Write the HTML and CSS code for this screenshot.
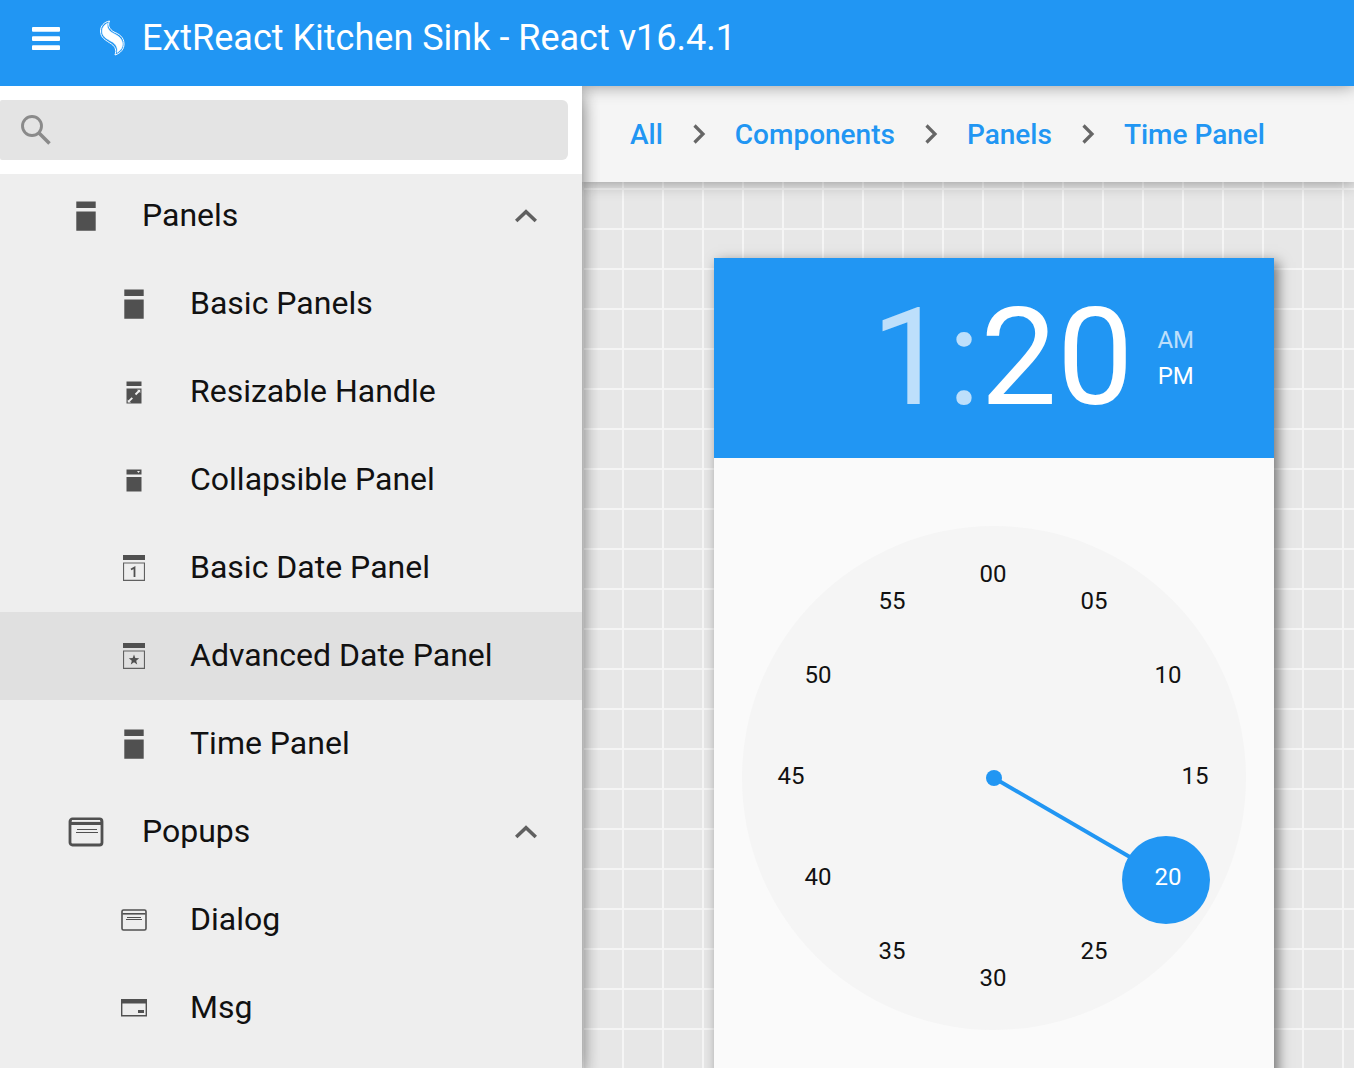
FILE: index.html
```
<!DOCTYPE html>
<html lang="en">
<head>
    <meta charset="UTF-8">
    <meta name="viewport" content="width=device-width, initial-scale=1.0">
    <title>ExtReact Kitchen Sink</title>
    <link rel="stylesheet" href="styles.css">
</head>
<body>
    <!-- shared icons -->
    <svg class="defs" width="0" height="0" aria-hidden="true">
        <symbol id="icon-panel" viewBox="0 0 20 30">
            <path d="M.3.500h19.400V7H.3zM.3 10.500h19.400v19.200H.3z"/>
        </symbol>
        <symbol id="icon-up" viewBox="0 0 22 14">
            <path d="M1.200 12 11 2.800l9.800 9.200" fill="none" stroke="currentColor" stroke-width="3.600"/>
        </symbol>
        <symbol id="icon-next" viewBox="0 0 14 20">
            <path d="M1.500 1.500 10 10l-8.500 8.500" fill="none" stroke="currentColor" stroke-width="3.200"/>
        </symbol>
    </svg>

    <header class="header">
        <button class="menu-button" aria-label="Toggle menu">
            <svg width="28" height="23" viewBox="0 0 28 23"><rect width="28" height="4.800" rx="1"/><rect y="9.200" width="28" height="4.800" rx="1"/><rect y="18.300" width="28" height="4.800" rx="1"/></svg>
        </button>
        <svg class="logo" width="26" height="36" viewBox="0 0 26 36">
            <path d="M10.500 1C5 2 1.500 6 1.500 11c0 7 5 9 11 13 4 3 5 6 3.500 11 6-2 9-6 9-11 0-7-5-10-10-12-5-3-6.500-7-4.500-11Z" fill="none" stroke="#fff" stroke-width="1"/>
            <path d="M8.500 3.200C5 5 3.200 8 3.200 11c0 6 5 8 10.300 11 4 3 5.500 6 4.500 10.500 4-2 5.500-5 5.500-8.500 0-5-4-8-9-10.500C9.500 11 7.500 7.500 8.500 3.200Z" fill="#fff" stroke="#fff" stroke-width=".6"/>
        </svg>
        <h1 class="title">ExtReact Kitchen Sink - React v16.4.1</h1>
    </header>

    <div class="body">
        <aside class="sidebar">
            <div class="search">
                <label class="search-box">
                    <svg width="30" height="30" viewBox="0 0 30 30"><circle cx="11" cy="11" r="9.500" fill="none" stroke="#8a8a8a" stroke-width="2.900"/><path d="m18 18 10.500 10.500" stroke="#8a8a8a" stroke-width="3.600"/></svg>
                    <input type="text" aria-label="Search">
                </label>
            </div>
            <ul class="tree">
                <li class="node parent">
                    <span class="node-icon"><svg width="20" height="30"><use href="#icon-panel"/></svg></span>
                    <a href="#">Panels</a>
                    <svg class="expander" width="22" height="14"><use href="#icon-up"/></svg>
                </li>
                <li class="node">
                    <span class="node-icon"><svg width="20" height="30"><use href="#icon-panel"/></svg></span>
                    <a href="#">Basic Panels</a>
                </li>
                <li class="node">
                    <span class="node-icon"><svg width="16" height="23" viewBox="0 0 16 23"><path d="M.5.500h15V5H.5zM.5 7.500h15v15H.5z"/><path d="m3 20.200 3.300-3.400M9.500 13.500 13 10" fill="none" stroke="#eee" stroke-width="1.900"/><path d="M1.700 18.400v3.200H5zM11 8.700h3.300V12z" fill="#eee"/></svg></span>
                    <a href="#">Resizable Handle</a>
                </li>
                <li class="node">
                    <span class="node-icon"><svg width="16" height="23" viewBox="0 0 16 23"><path d="M.5.500h15v5H.5zM.5 8h15v14.500H.5z"/><path d="M11 2h3l-1.500 2z" fill="#eee"/></svg></span>
                    <a href="#">Collapsible Panel</a>
                </li>
                <li class="node">
                    <span class="node-icon"><svg width="22" height="26" viewBox="0 0 22 26"><path d="M0 0h22v5H0z"/><path d="M.5 8h21v17.300H.5z" fill="none" stroke="#606060" stroke-width="1.200"/><path d="M8 14.500 11.500 12.500V22" fill="none" stroke="#505050" stroke-width="1.800"/></svg></span>
                    <a href="#">Basic Date Panel</a>
                </li>
                <li class="node selected">
                    <span class="node-icon"><svg width="22" height="26" viewBox="0 0 22 26"><path d="M0 0h22v5H0z"/><path d="M.5 8h21v17.300H.5z" fill="none" stroke="#606060" stroke-width="1.200"/><path d="m11 11.500 1.300 3.600 3.900.1-3 2.500 1 3.800-3.200-2.200-3.200 2.200 1-3.800-3-2.500 3.900-.1z"/></svg></span>
                    <a href="#">Advanced Date Panel</a>
                </li>
                <li class="node">
                    <span class="node-icon"><svg width="20" height="30"><use href="#icon-panel"/></svg></span>
                    <a href="#">Time Panel</a>
                </li>
                <li class="node parent">
                    <span class="node-icon"><svg width="36" height="30" viewBox="0 0 36 30"><rect x="2" y="2" width="32" height="26" rx="2.500" fill="none" stroke="#505050" stroke-width="2.800"/><path d="M2 4.500h32V8H2z"/><path d="M4 3h28v1.800H4z" fill="#eee"/><path d="M9 12.500h20M8 15.500h22" stroke="#505050" stroke-width="1"/></svg></span>
                    <a href="#">Popups</a>
                    <svg class="expander" width="22" height="14"><use href="#icon-up"/></svg>
                </li>
                <li class="node">
                    <span class="node-icon"><svg width="26" height="22" viewBox="0 0 26 22"><rect x="1" y="1" width="24" height="20" rx="1.500" fill="none" stroke="#505050" stroke-width="1.600"/><path d="M1.500 4.800h23" stroke="#505050" stroke-width="1.600"/><path d="M6 8.500h14M5 10.500h16" stroke="#505050" stroke-width="1"/></svg></span>
                    <a href="#">Dialog</a>
                </li>
                <li class="node">
                    <span class="node-icon"><svg width="26" height="18" viewBox="0 0 26 18"><path d="M.7.700h24.600v16H.7z" fill="none" stroke="#505050" stroke-width="1.400"/><path d="M0 0h26v4.500H0zM17 11h6v3h-6z"/></svg></span>
                    <a href="#">Msg</a>
                </li>
            </ul>
        </aside>

        <main class="main">
            <nav class="breadcrumb">
                <a href="#">All</a>
                <svg width="14" height="20"><use href="#icon-next"/></svg>
                <a href="#">Components</a>
                <svg width="14" height="20"><use href="#icon-next"/></svg>
                <a href="#">Panels</a>
                <svg width="14" height="20"><use href="#icon-next"/></svg>
                <a href="#">Time Panel</a>
            </nav>
            <div class="content">
                <section class="time-panel">
                    <div class="time-header">
                        <div class="time">
                            <button class="hour">1</button><span class="colon">:</span><button class="minute">20</button>
                        </div>
                        <div class="meridiem">
                            <button class="off">AM</button>
                            <button>PM</button>
                        </div>
                    </div>
                    <div class="face">
                        <svg class="hand" viewBox="0 0 504 504">
                            <path d="M252 252 424 352" stroke="#2196f3" stroke-width="4"/>
                            <circle cx="252" cy="252" r="8" fill="#2196f3"/>
                            <circle cx="424" cy="354" r="44" fill="#2196f3"/>
                        </svg>
                        <button class="mark" style="--i: 0">00</button>
                        <button class="mark" style="--i: 1">05</button>
                        <button class="mark" style="--i: 2">10</button>
                        <button class="mark" style="--i: 3">15</button>
                        <button class="mark active" style="--i: 4">20</button>
                        <button class="mark" style="--i: 5">25</button>
                        <button class="mark" style="--i: 6">30</button>
                        <button class="mark" style="--i: 7">35</button>
                        <button class="mark" style="--i: 8">40</button>
                        <button class="mark" style="--i: 9">45</button>
                        <button class="mark" style="--i: 10">50</button>
                        <button class="mark" style="--i: 11">55</button>
                    </div>
                </section>
            </div>
        </main>
    </div>
</body>
</html>
```

FILE: styles.css
```
* { box-sizing: border-box; }
body { margin: 0; height: 100vh; display: flex; flex-direction: column; overflow: hidden; font-family: Roboto, sans-serif; color: #111; }
button { padding: 0; border: none; background: none; font: inherit; color: inherit; cursor: pointer; }
a { color: inherit; text-decoration: none; }
svg { display: block; flex: none; }
.defs { position: absolute; }

/* top bar */
.header { position: relative; z-index: 1; flex: none; display: flex; align-items: center; height: 86px; padding: 0 32px 10px; background: #2196f3; color: #fff; box-shadow: 0 0 16px rgba(0, 0, 0, 0.4); }
.menu-button { margin-right: 39px; }
.menu-button svg { fill: #fff; }
.logo { margin-right: 17px; }
.title { margin: 0; font-size: 36px; font-weight: 400; line-height: 48px; white-space: nowrap; }

.body { flex: 1; display: flex; min-height: 0; }

/* navigation */
.sidebar { position: relative; z-index: 2; flex: none; width: 582px; display: flex; flex-direction: column; background: #eee; box-shadow: 0 16px 16px rgba(0, 0, 0, 0.3), 0 0 16px rgba(0, 0, 0, 0.3); clip-path: inset(0 -30px 0 0); }
.search { position: relative; z-index: 1; padding: 14px 14px 14px 0; background: #fff; }
.search-box { display: flex; align-items: center; gap: 16px; height: 60px; padding: 0 21px; background: #e4e4e4; border-radius: 2px 6px 6px 2px; }
.search-box input { flex: 1; border: none; outline: none; background: none; font: inherit; font-size: 32px; }
.tree { flex: 1; min-height: 0; overflow: hidden; margin: -2px 0 0; padding: 0; list-style: none; }
.node { display: flex; align-items: center; height: 88px; padding: 0 45px 0 110px; font-size: 32px; }
.node a { flex: 1; line-height: 40px; padding-bottom: 2px; }
.node.parent { padding-left: 62px; }
.node.selected { background: #e0e0e0; }
.node-icon { display: flex; justify-content: center; width: 48px; margin-right: 32px; }
.node-icon svg { fill: #505050; }
.expander { color: #606060; }

/* main area */
.main { flex: 1; min-width: 0; display: flex; flex-direction: column; }
.breadcrumb { position: relative; flex: none; display: flex; align-items: center; height: 96px; padding: 0 48px; background: #f5f5f5; color: #666; box-shadow: 0 0 16px rgba(0, 0, 0, 0.4); }
.breadcrumb a { color: #2196f3; font-size: 28px; font-weight: 500; }
.breadcrumb svg { margin: 0 28px 0 30px; }
.content { flex: 1; min-height: 0; overflow: hidden; padding: 76px 80px 0 132px; background-color: #e7e7e7; background-image: linear-gradient(#f5f5f5 2px, transparent 2px), linear-gradient(90deg, #f5f5f5 2px, transparent 2px); background-size: 40px 40px; background-position: 0 6px; }

/* time panel */
.time-panel { width: 560px; height: 900px; background: #fafafa; box-shadow: 4px 4px 12px rgba(0, 0, 0, 0.5); }
.time-header { display: flex; justify-content: flex-end; align-items: center; height: 200px; padding-right: 80px; background: #2196f3; color: #fff; }
.time { display: flex; font-size: 136px; line-height: 160px; }
.hour, .colon, .off { opacity: 0.7; }
.meridiem { display: flex; flex-direction: column; margin-left: 24px; font-size: 24px; line-height: 36px; }
.face { position: relative; width: 504px; height: 504px; margin: 68px auto 0; border-radius: 50%; background: #f5f5f5; }
.hand { width: 100%; height: 100%; }
.mark { position: absolute; left: calc(50% + 202px * sin(var(--i) * 30deg)); top: calc(50% - 202px * cos(var(--i) * 30deg)); width: 64px; height: 64px; margin: -34px 0 0 -33px; font-size: 24px; line-height: 64px; }
.mark.active { color: #fff; }
```
